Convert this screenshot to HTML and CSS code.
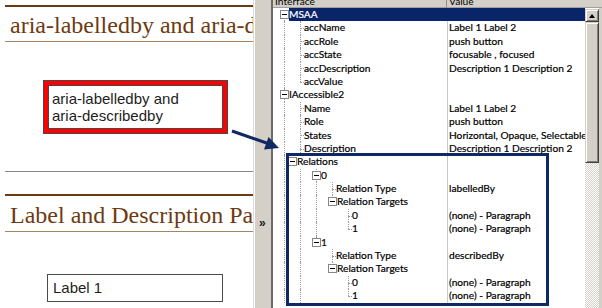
FILE: index.html
```html
<!DOCTYPE html>
<html>
<head>
<meta charset="utf-8">
<link rel="stylesheet" href="styles.css">
</head>
<body>
<div class="screen">
  <div class="doc">
    <h1 class="hd">aria-labelledby and aria-describedby</h1>
    <div class="btnbox"><div class="btn-inner">aria-labelledby and<br>aria-describedby</div></div>
    <div class="sep"></div>
    <h1 class="hd hd2">Label and Description Pairs</h1>
    <div class="field">Label 1</div>
  </div>
  <div class="splitter"><span class="chev">»</span></div>
  <div class="inspector">
    <div class="thead">
      <div class="th th-name"><span>Interface</span></div>
      <div class="th th-val"><span>Value</span></div>
    </div>
    <div class="tbody">
      <div class="tree">
        <div class="row sel"><div class="name"><span class="c bx f"><i class="box"></i></span><span class="lbl">MSAA</span></div><div class="val"></div></div>
        <div class="row"><div class="name"><span class="g v"></span><span class="c t"></span><span class="lbl">accName</span></div><div class="val">Label 1 Label 2</div></div>
        <div class="row"><div class="name"><span class="g v"></span><span class="c t"></span><span class="lbl">accRole</span></div><div class="val">push button</div></div>
        <div class="row"><div class="name"><span class="g v"></span><span class="c t"></span><span class="lbl">accState</span></div><div class="val">focusable , focused</div></div>
        <div class="row"><div class="name"><span class="g v"></span><span class="c t"></span><span class="lbl">accDescription</span></div><div class="val">Description 1 Description 2</div></div>
        <div class="row"><div class="name"><span class="g v"></span><span class="c l"></span><span class="lbl">accValue</span></div><div class="val"></div></div>
        <div class="row"><div class="name"><span class="c bx t"><i class="box"></i></span><span class="lbl">IAccessible2</span></div><div class="val"></div></div>
        <div class="row"><div class="name"><span class="g v"></span><span class="c t"></span><span class="lbl">Name</span></div><div class="val">Label 1 Label 2</div></div>
        <div class="row"><div class="name"><span class="g v"></span><span class="c t"></span><span class="lbl">Role</span></div><div class="val">push button</div></div>
        <div class="row"><div class="name"><span class="g v"></span><span class="c t"></span><span class="lbl">States</span></div><div class="val">Horizontal, Opaque, Selectable</div></div>
        <div class="row"><div class="name"><span class="g v"></span><span class="c t"></span><span class="lbl">Description</span></div><div class="val">Description 1 Description 2</div></div>
        <div class="row"><div class="name"><span class="g v"></span><span class="c bx t rel"><i class="box"></i></span><span class="lbl">Relations</span></div><div class="val"></div></div>
        <div class="row"><div class="name"><span class="g v"></span><span class="g v"></span><span class="c bx t"><i class="box"></i></span><span class="lbl">0</span></div><div class="val"></div></div>
        <div class="row"><div class="name"><span class="g v"></span><span class="g v"></span><span class="g v"></span><span class="c t"></span><span class="lbl">Relation Type</span></div><div class="val">labelledBy</div></div>
        <div class="row"><div class="name"><span class="g v"></span><span class="g v"></span><span class="g v"></span><span class="c bx l"><i class="box"></i></span><span class="lbl">Relation Targets</span></div><div class="val"></div></div>
        <div class="row"><div class="name"><span class="g v"></span><span class="g v"></span><span class="g v"></span><span class="g"></span><span class="c t"></span><span class="lbl">0</span></div><div class="val">(none) - Paragraph</div></div>
        <div class="row"><div class="name"><span class="g v"></span><span class="g v"></span><span class="g v"></span><span class="g"></span><span class="c l"></span><span class="lbl">1</span></div><div class="val">(none) - Paragraph</div></div>
        <div class="row"><div class="name"><span class="g v"></span><span class="g v"></span><span class="c bx l"><i class="box"></i></span><span class="lbl">1</span></div><div class="val"></div></div>
        <div class="row"><div class="name"><span class="g v"></span><span class="g v"></span><span class="g"></span><span class="c t"></span><span class="lbl">Relation Type</span></div><div class="val">describedBy</div></div>
        <div class="row"><div class="name"><span class="g v"></span><span class="g v"></span><span class="g"></span><span class="c bx l"><i class="box"></i></span><span class="lbl">Relation Targets</span></div><div class="val"></div></div>
        <div class="row"><div class="name"><span class="g v"></span><span class="g v"></span><span class="g"></span><span class="g"></span><span class="c t"></span><span class="lbl">0</span></div><div class="val">(none) - Paragraph</div></div>
        <div class="row"><div class="name"><span class="g v"></span><span class="g v"></span><span class="g"></span><span class="g"></span><span class="c l"></span><span class="lbl">1</span></div><div class="val">(none) - Paragraph</div></div>
      </div>
      <div class="vscroll">
        <div class="sbtn"><i class="uparrow"></i></div>
        <div class="thumb"></div>
        <div class="track"></div>
      </div>
    </div>
  </div>
  <div class="annot"></div>
  <svg class="arrow" width="602" height="308" viewBox="0 0 602 308">
    <line x1="232" y1="131" x2="268" y2="143.5" stroke="#0f2a63" stroke-width="3"/>
    <polygon points="279,148 264,149.5 268.5,137" fill="#0f2a63"/>
  </svg>
</div>
</body>
</html>
```
FILE: styles.css
```css
* { box-sizing: border-box; margin: 0; padding: 0; }
html, body { width: 602px; height: 308px; overflow: hidden; background: #fff; }
body { font-family: "Liberation Sans", Arial, sans-serif; }

.screen { position: relative; display: flex; width: 602px; height: 308px; }

/* left document pane */
.doc { width: 253px; flex: none; padding: 5px 0 0 5px; overflow: hidden; background: #fff; }
.hd {
  width: 248px; height: 37px;
  border-top: 2px solid #6b3a12; border-bottom: 1px solid #a88462;
  font-family: "Liberation Serif", "Times New Roman", serif; font-weight: normal;
  font-size: 24px; line-height: 24px; color: #6e3a10;
  white-space: nowrap; overflow: hidden; padding: 6px 0 0 5px;
}
.hd2 { margin-top: 22px; height: 38px; padding-top: 7px; }
.btnbox {
  margin: 38px 0 0 38px; width: 185px;
  border: 1px solid #3f4c4c; background: #ff0000; padding: 4px;
}
.btn-inner {
  border: 1px solid #3f4c4c; background: #fff; height: 44px;
  padding: 4px 3px 0; font-size: 15px; line-height: 17px; color: #1e1e1e;
}
.sep { margin-top: 37px; width: 248px; height: 1px; background: #8a8a8a; }
.field {
  margin: 42px 0 0 42px; width: 176px; height: 28px;
  border: 1px solid #4a4a4a; padding-left: 5px;
  font-size: 15px; line-height: 26px; color: #1e1e1e;
}

/* splitter */
.splitter {
  width: 20px; flex: none; background: #d4d0c8;
  border-left: 1px solid #dcdcdc; border-right: 2px solid #6a6a6a;
  box-shadow: inset 1px 0 #fff;
  padding: 213px 0 0 5px;
}
.chev { font-size: 12px; font-weight: bold; line-height: 16px; color: #1a1a1a; }

/* inspector */
.inspector { flex: 1; display: flex; flex-direction: column; min-width: 0; }
.thead { height: 8px; flex: none; display: flex; background: #d4d0c8; border-bottom: 1px solid #a0a0a0; overflow: hidden; }
.th { font-family: Lato, "Liberation Sans", sans-serif; font-size: 10.2px; line-height: 11px; color: #000; padding-left: 2px; }
.th span { display: block; margin-top: -4px; }
.th-name { width: 174px; border-right: 1px solid #8c8c8c; }
.th-val { flex: 1; }

.tbody { flex: 1; display: flex; border-right: 3px solid #d4d0c8; min-height: 0; }
.tree { width: 312px; flex: none; overflow: hidden; }
.row {
  display: flex; height: 13.4px; line-height: 13.4px;
  font-family: Lato, "Liberation Sans", sans-serif; font-size: 10.2px; color: #000;
  -webkit-text-stroke: 0.2px currentColor;
  white-space: nowrap;
}
.name { width: 174px; flex: none; display: flex; padding-left: 3px; }
.g, .c { position: relative; flex: none; height: 100%; }
.g { width: 16px; }
.c { width: 12px; }
.c.bx { width: 13px; }
.g.v::before, .c::before {
  content: ""; position: absolute; left: 8px; top: 0; bottom: 0;
  border-left: 1px dotted #9a9a9a;
}
.c.l::before { bottom: 50%; }
.c.f::before { top: 50%; }
.c::after {
  content: ""; position: absolute; left: 8px; right: 0; top: 50%;
  border-top: 1px dotted #9a9a9a;
}
.c.bx::after { display: none; }
.c.rel { margin-left: -8px; }
.c.rel::before { display: none; }
.box {
  position: absolute; left: 4px; top: 2px; width: 9px; height: 9px;
  border: 1px solid #868686; background: #fff;
}
.box::before {
  content: ""; position: absolute; left: 1px; top: 3px; width: 5px; height: 1px; background: #000;
}
.lbl { flex: 1; overflow: hidden; }
.val { flex: 1; border-left: 1px solid #c8c8c8; padding-left: 1px; overflow: hidden; }
.sel .lbl, .sel .val { background: #0a246a; color: #fff; }
.sel .val { border-left-color: #0a246a; }

/* scrollbar */
.vscroll { width: 14px; flex: none; display: flex; flex-direction: column; }
.sbtn, .thumb {
  background: #d4d0c8;
  border: 1px solid; border-color: #d4d0c8 #404040 #404040 #d4d0c8;
  box-shadow: inset 1px 1px #fff, inset -1px -1px #808080;
}
.sbtn { height: 13px; margin-top: 1px; display: flex; align-items: center; justify-content: center; }
.uparrow { width: 0; height: 0; border-left: 3.5px solid transparent; border-right: 3.5px solid transparent; border-bottom: 4px solid #000; }
.thumb { height: 141px; }
.track { flex: 1; background: repeating-conic-gradient(#d4d0c8 0 25%, #fff 0 50%) 0 0 / 2px 2px; }

/* annotations */
.annot { position: absolute; left: 286px; top: 153px; width: 263px; height: 153px; border: 3px solid #0e2a66; }
.arrow { position: absolute; left: 0; top: 0; pointer-events: none; }
```
